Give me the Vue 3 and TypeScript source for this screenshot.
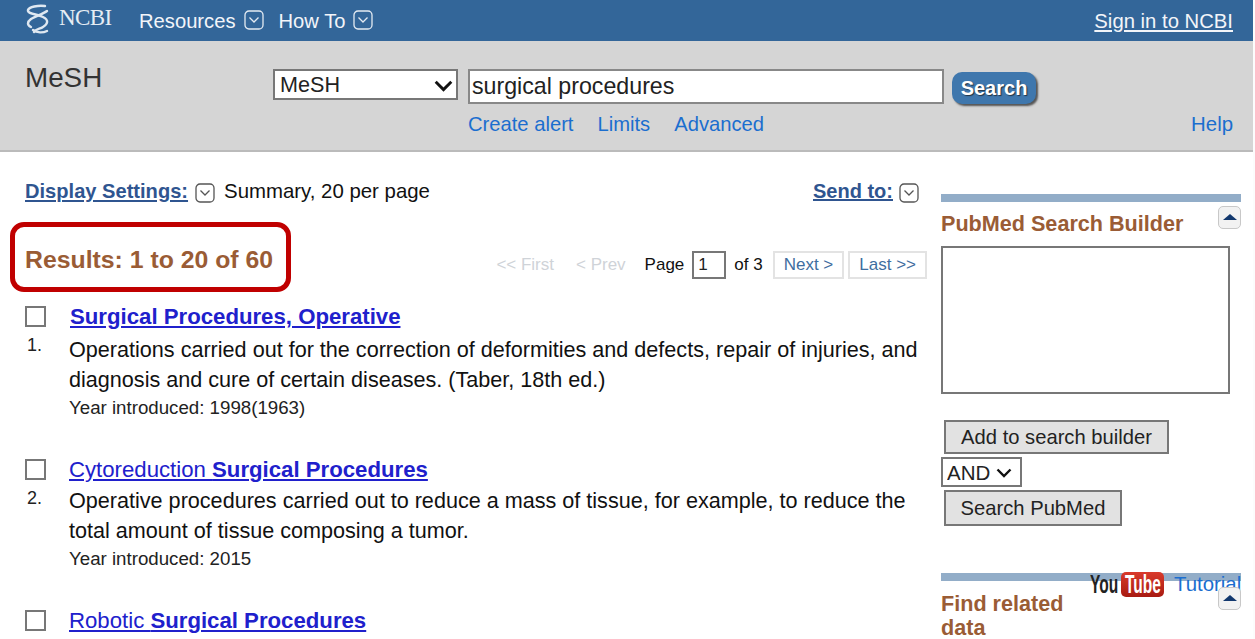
<script setup lang="ts">
type Part = { text: string; bold: boolean };
type Result = { id: number; title: Part[]; desc: string[]; year: string };

const results: Result[] = [
  {
    id: 1,
    title: [{ text: "Surgical Procedures, Operative", bold: true }],
    desc: [
      "Operations carried out for the correction of deformities and defects, repair of injuries, and",
      "diagnosis and cure of certain diseases. (Taber, 18th ed.)",
    ],
    year: "Year introduced: 1998(1963)",
  },
  {
    id: 2,
    title: [
      { text: "Cytoreduction ", bold: false },
      { text: "Surgical Procedures", bold: true },
    ],
    desc: [
      "Operative procedures carried out to reduce a mass of tissue, for example, to reduce the",
      "total amount of tissue composing a tumor.",
    ],
    year: "Year introduced: 2015",
  },
  {
    id: 3,
    title: [
      { text: "Robotic ", bold: false },
      { text: "Surgical Procedures", bold: true },
    ],
    desc: [],
    year: "",
  },
];
</script>

<template>
  <div id="layout">
    <header class="topbar">
      <svg class="logo" width="24" height="30" viewBox="0 0 24 30" fill="none" stroke="#dfe8f1" stroke-width="2.4" stroke-linecap="round">
        <path d="M19 2 C12 1 3 3 2 6 C1 10 11 10 17 13 C23 16 22 20 17 23 C14 25 10 25 8 28" />
        <path d="M21 7 C17 10 10 12 5 15 C1 18 1 21 5 23 M7 26 C11 29 17 29 21 27" />
      </svg>
      <span class="ncbi">NCBI</span>
      <nav class="topnav">
        <a>Resources</a>
        <svg class="chev light" viewBox="0 0 20 20"><rect x="1" y="1" width="18" height="18" rx="4" /><path d="M5.5 7.5 10 12l4.5-4.5" /></svg>
        <a class="howto">How To</a>
        <svg class="chev light" viewBox="0 0 20 20"><rect x="1" y="1" width="18" height="18" rx="4" /><path d="M5.5 7.5 10 12l4.5-4.5" /></svg>
      </nav>
      <a class="signin">Sign in to NCBI</a>
    </header>

    <section class="searchbar">
      <div class="dbname">MeSH</div>
      <div class="searchmid">
        <div class="searchrow">
          <div class="selectwrap db">
            <select><option>MeSH</option></select>
            <svg viewBox="0 0 16 10"><path d="M1.5 1.5 8 8l6.5-6.5" /></svg>
          </div>
          <input class="term" type="text" value="surgical procedures" />
          <button class="gobtn">Search</button>
        </div>
        <div class="sublinks">
          <a>Create alert</a>
          <a>Limits</a>
          <a>Advanced</a>
        </div>
      </div>
      <a class="help">Help</a>
    </section>

    <main class="page">
      <div class="content">
        <div class="displaybar">
          <a class="settings">Display Settings:</a>
          <svg class="chev dark" viewBox="0 0 20 20"><rect x="1" y="1" width="18" height="18" rx="4" /><path d="M5.5 7.5 10 12l4.5-4.5" /></svg>
          <span class="summary">Summary, 20 per page</span>
          <a class="sendto">Send to:</a>
          <svg class="chev dark" viewBox="0 0 20 20"><rect x="1" y="1" width="18" height="18" rx="4" /><path d="M5.5 7.5 10 12l4.5-4.5" /></svg>
        </div>

        <div class="resultsbar">
          <h2 class="count">Results: 1 to 20 of 60</h2>
          <div class="pager">
            <span class="off first">&lt;&lt; First</span>
            <span class="off prev">&lt; Prev</span>
            <span>Page</span>
            <input class="pageno" type="text" value="1" />
            <span>of 3</span>
            <a class="pagebtn next">Next &gt;</a>
            <a class="pagebtn">Last &gt;&gt;</a>
          </div>
        </div>

        <ul class="list">
          <li v-for="r in results" :key="r.id" class="item">
            <div class="mark">
              <span class="check"></span>
              <span v-if="r.desc.length" class="num">{{ r.id }}.</span>
            </div>
            <div class="body">
              <a class="title" :class="{ indent: r.id === 1 }">
                <template v-for="p in r.title" :key="p.text"><b v-if="p.bold">{{ p.text }}</b><template v-else>{{ p.text }}</template></template>
              </a>
              <p v-for="d in r.desc" :key="d" class="desc">{{ d }}</p>
              <p v-if="r.year" class="year">{{ r.year }}</p>
            </div>
          </li>
        </ul>
      </div>

      <aside class="side">
        <div class="sidebar-rule"></div>
        <div class="sidehead">
          <h3>PubMed Search Builder</h3>
          <span class="collapse"><i></i></span>
        </div>
        <textarea class="builder"></textarea>
        <button class="graybtn add">Add to search builder</button>
        <div class="selectwrap op">
          <select><option>AND</option></select>
          <svg viewBox="0 0 16 10"><path d="M1.5 1.5 8 8l6.5-6.5" /></svg>
        </div>
        <button class="graybtn pm">Search PubMed</button>

        <div class="sidebar-rule second"></div>
        <div class="sidehead related">
          <h3>Find related data</h3>
          <span class="collapse"><i></i></span>
        </div>
        <div class="tutorial">
          <span class="you">You</span>
          <span class="tube"><span>Tube</span></span>
          <a>Tutorial</a>
        </div>
      </aside>
    </main>
    <div class="redbox"></div>
  </div>
</template>

<style scoped>
#layout {
  position: relative;
  width: 1253px;
  height: 639px;
  overflow: hidden;
  background: #fff;
  font-family: "Liberation Sans", Arial, sans-serif;
  color: #1a1a1a;
}
.topbar {
  height: 41px;
  background: #336699;
  color: #f2f5f9;
  display: flex;
  align-items: center;
  padding: 0 20px 0 26px;
}
.logo {
  margin-right: 9px;
  margin-top: -3px;
}
.ncbi {
  font-family: "Liberation Serif", serif;
  font-size: 23px;
  letter-spacing: -0.6px;
  color: #e6edf4;
  margin-top: -5px;
  width: 80px;
}
.topnav {
  display: flex;
  align-items: center;
  font-size: 20.2px;
  margin-top: 2px;
}
.howto {
  margin-left: 15px;
}
.chev {
  width: 20px;
  height: 20px;
  margin-left: 8px;
  fill: none;
  stroke-width: 1.3;
}
.chev.light {
  stroke: #e4ebf2;
  margin-top: -4px;
}
.chev.dark {
  stroke: #555;
}
.signin {
  margin-left: auto;
  margin-top: 1px;
  font-size: 20.3px;
  text-decoration: underline;
}
.searchbar {
  height: 111px;
  box-sizing: border-box;
  background: #d5d5d5;
  border-bottom: 2px solid #bbb;
  display: flex;
  padding: 0 20px 0 25px;
  position: relative;
}
.dbname {
  font-size: 27.8px;
  color: #333;
  width: 248px;
  padding-top: 21px;
}
.searchmid {
  padding-top: 28px;
}
.searchrow {
  display: flex;
  align-items: flex-start;
}
.selectwrap {
  position: relative;
  box-sizing: border-box;
  background: #fff;
  border: 2px solid #777;
}
.selectwrap select {
  appearance: none;
  border: none;
  background: transparent;
  width: 100%;
  height: 100%;
  font-family: inherit;
  color: #222;
  padding: 0 0 0 5px;
  outline: none;
}
.selectwrap svg {
  position: absolute;
  fill: none;
  stroke: #111;
  stroke-width: 2.4;
}
.db {
  width: 185px;
  height: 31px;
}
.db select {
  font-size: 21.6px;
}
.db svg {
  right: 2px;
  top: 9px;
  width: 21px;
  height: 12px;
}
.term {
  width: 476px;
  height: 35px;
  box-sizing: border-box;
  margin-left: 10px;
  border: 2px solid #888;
  padding: 0 2px;
  font-family: inherit;
  font-size: 23.2px;
  color: #222;
  outline: none;
}
.gobtn {
  margin-left: 8px;
  margin-top: 3px;
  width: 84px;
  height: 32px;
  border: none;
  border-radius: 10px;
  background: #3f77ad;
  box-shadow: 2px 2px 2px #555;
  color: #fff;
  font-family: inherit;
  font-size: 20px;
  font-weight: bold;
  text-shadow: 1px 1px 1px #234;
  padding: 0;
}
.sublinks {
  display: flex;
  gap: 24px;
  margin: 9px 0 0 195px;
  font-size: 20.2px;
  color: #1b6ecf;
}
.help {
  position: absolute;
  right: 20px;
  top: 72px;
  font-size: 20.4px;
  color: #1b6ecf;
}
.page {
  display: flex;
  padding: 25px 12px 0 25px;
}
.content {
  width: 902px;
  flex: none;
}
.displaybar {
  display: flex;
  align-items: center;
  height: 28px;
  padding-right: 8px;
  font-size: 20px;
}
.settings {
  font-size: 20.1px;
  font-weight: bold;
  color: #2f5590;
  text-decoration: underline;
}
.displaybar .chev {
  margin: 3px 8px 0 7px;
}
.summary {
  color: #111;
  font-size: 20.4px;
  margin-left: 1px;
}
.sendto {
  margin-left: auto;
  font-weight: bold;
  color: #2f5590;
  text-decoration: underline;
}
.displaybar .chev:last-child {
  margin-right: 0;
  margin-left: 6px;
}
.resultsbar {
  display: flex;
  align-items: center;
  justify-content: space-between;
  margin-top: 36px;
  height: 38px;
}
.count {
  margin: 0;
  font-size: 24.8px;
  font-weight: bold;
  color: #9a5c35;
}
.pager {
  display: flex;
  align-items: center;
  font-size: 17px;
  color: #111;
  margin-top: 9px;
}
.off {
  color: #cfd3d8;
}
.first {
  margin-right: 22px;
}
.prev {
  margin-right: 19px;
}
.pageno {
  width: 34px;
  height: 28px;
  box-sizing: border-box;
  margin: 0 8px;
  border: 2px solid #777;
  padding: 0 4px;
  font-family: inherit;
  font-size: 17px;
  color: #222;
  outline: none;
}
.pagebtn {
  border: 2px solid #e3e3e3;
  padding: 2px 9px;
  line-height: 20px;
  color: #3f6ea0;
  margin-left: 4px;
}
.next {
  margin-left: 10px;
}
.list {
  list-style: none;
  margin: 23px 0 0;
  padding: 0;
}
.item {
  display: flex;
  margin-bottom: 35px;
}
.mark {
  width: 44px;
  flex: none;
  display: flex;
  flex-direction: column;
  padding-top: 4px;
}
.check {
  width: 21px;
  height: 21px;
  box-sizing: border-box;
  border: 2px solid #777;
  background: #fff;
}
.num {
  font-size: 18px;
  margin: 8px 0 0 2px;
  color: #222;
}
.title {
  display: block;
  font-size: 22.2px;
  line-height: 30px;
  color: #2020cc;
  text-decoration: underline;
}
.title.indent {
  margin-left: 1px;
}
.desc {
  margin: 0;
  font-size: 21.6px;
  line-height: 30px;
  color: #111;
}
.desc:nth-of-type(1) {
  margin-top: 3px;
}
.item:nth-child(2) .desc:nth-of-type(1) {
  margin-top: 1px;
}
.year {
  margin: 1px 0 0;
  font-size: 18.7px;
  line-height: 24px;
  color: #222;
}
.side {
  flex: none;
  width: 300px;
  margin-left: 14px;
  padding-top: 17px;
  position: relative;
}
.sidebar-rule {
  height: 8px;
  background: #92adc8;
}
.sidebar-rule.second {
  margin-top: 47px;
}
.sidehead {
  display: flex;
  justify-content: space-between;
  align-items: flex-start;
  margin-top: 4px;
}
.sidehead h3 {
  margin: 6px 0 0;
  font-size: 21.6px;
  line-height: 24px;
  color: #9a5c35;
}
.related h3 {
  width: 150px;
  margin-top: 7px;
}
.related .collapse {
  margin-top: 2px;
}
.collapse {
  position: relative;
  z-index: 1;
  width: 23px;
  height: 23px;
  box-sizing: border-box;
  border: 1px solid #c8c8c8;
  border-radius: 5px;
  background: #f2f2f2;
  display: flex;
  justify-content: center;
  padding-top: 7px;
}
.collapse i {
  width: 0;
  height: 0;
  border-left: 7px solid transparent;
  border-right: 7px solid transparent;
  border-bottom: 6px solid #12386e;
}
.builder {
  display: block;
  box-sizing: border-box;
  width: 289px;
  height: 148px;
  margin-top: 10px;
  border: 2px solid #777;
  resize: none;
  outline: none;
}
.graybtn {
  display: block;
  box-sizing: border-box;
  height: 34px;
  margin-left: 3px;
  border: 2px solid #777;
  background: #e2e2e2;
  color: #222;
  font-family: inherit;
  font-size: 20.2px;
  padding: 0;
}
.add {
  width: 225px;
  margin-top: 26px;
}
.op {
  width: 81px;
  height: 30px;
  margin-top: 3px;
}
.op select {
  font-size: 20.5px;
  padding-left: 4px;
}
.op svg {
  right: 8px;
  top: 9px;
  width: 16px;
  height: 10px;
}
.pm {
  width: 178px;
  height: 36px;
  margin-top: 3px;
}
.tutorial {
  position: absolute;
  right: 0;
  top: 394px;
  display: flex;
  align-items: center;
  width: 151px;
  overflow: hidden;
  height: 26px;
}
.you {
  font-size: 25px;
  font-weight: bold;
  color: #222;
  display: inline-block;
  transform: scaleX(0.62);
  transform-origin: left center;
  width: 31px;
}
.tube {
  flex: none;
  width: 43px;
  height: 25px;
  border-radius: 5px;
  background: linear-gradient(#d93a2b, #a81b12);
  display: flex;
  justify-content: center;
  align-items: center;
  font-size: 25px;
  font-weight: bold;
  color: #fff;
}
.tube span {
  display: inline-block;
  transform: scaleX(0.62);
}
.tutorial a {
  margin-left: 10px;
  font-size: 20.4px;
  color: #1b6ecf;
  white-space: nowrap;
}
.redbox {
  position: absolute;
  left: 10px;
  top: 222px;
  width: 281px;
  height: 70px;
  box-sizing: border-box;
  border: 5px solid #c00000;
  border-radius: 14px;
  pointer-events: none;
}
</style>

<style>
html,
body {
  margin: 0;
  background: #fcfcfc;
}
</style>
